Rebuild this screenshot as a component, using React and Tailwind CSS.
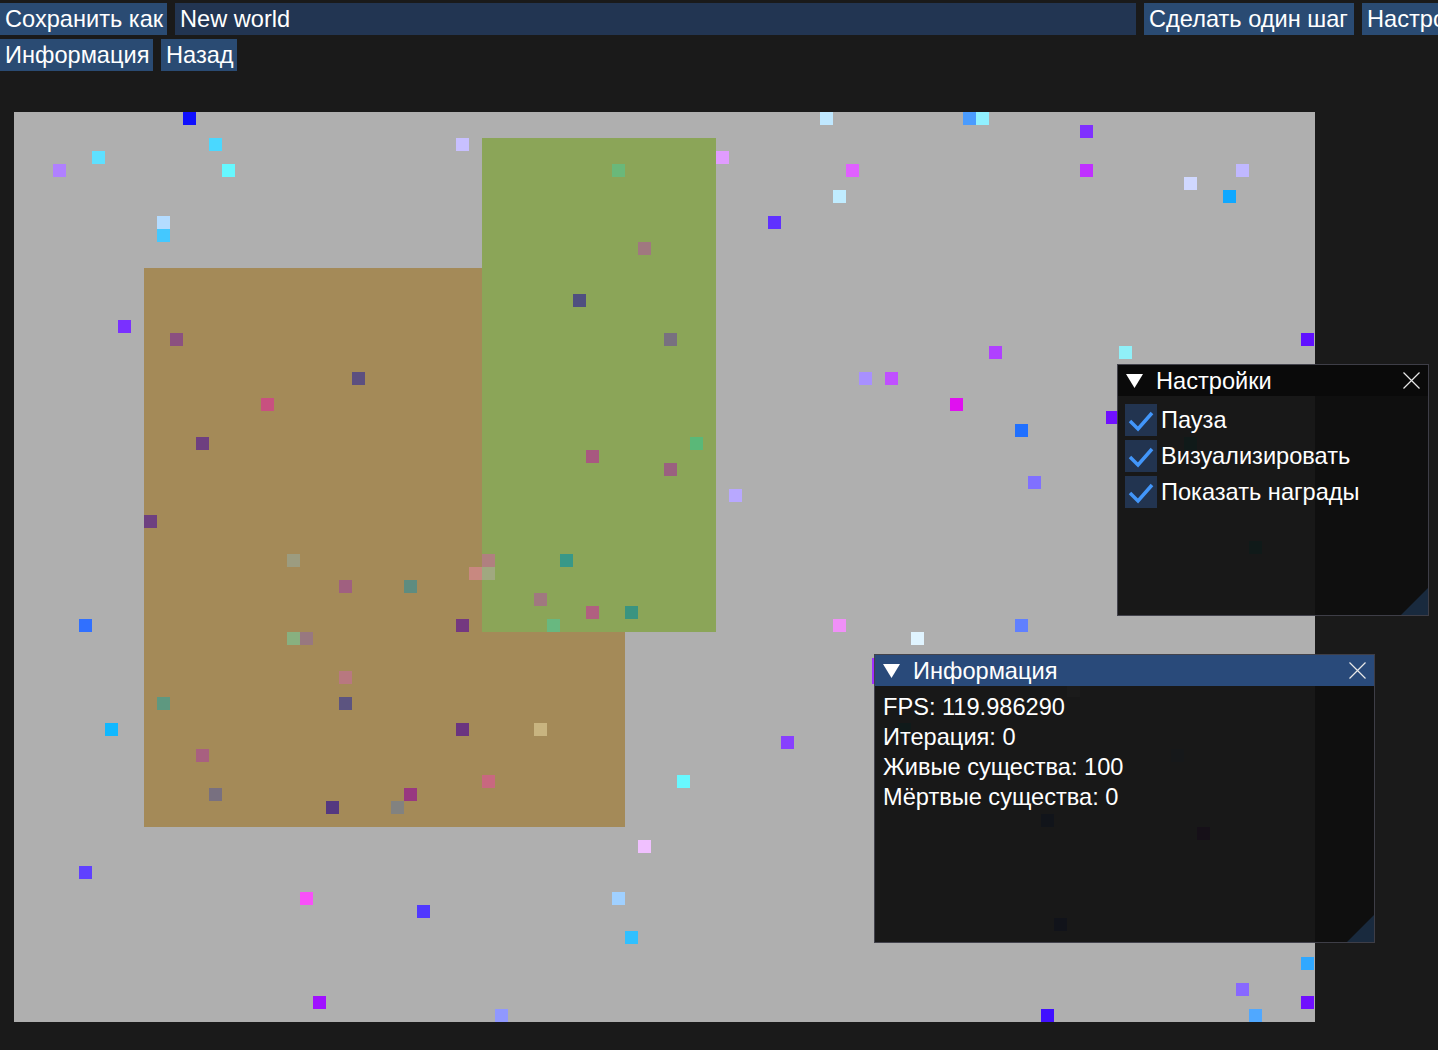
import React from 'react';

// world cells: [col, row, colour]
const cells = [
  [13, 0, '#1010ff'], [62, 0, '#c0e8ff'], [73, 0, '#4a9cff'], [74, 0, '#90f0ff'],
  [82, 1, '#8030ff'],
  [15, 2, '#4ad8ff'], [34, 2, '#c8c0ff'],
  [6, 3, '#5ee0ff'], [54, 3, '#e09cff'],
  [3, 4, '#b080ff'], [16, 4, '#66f8ff'], [46, 4, '#6ab87a'], [64, 4, '#e060ff'], [82, 4, '#c030ff'], [94, 4, '#c0b8ff'],
  [90, 5, '#d0d8ff'],
  [63, 6, '#c0ecff'], [93, 6, '#10a8ff'],
  [11, 8, '#b4dcff'], [58, 8, '#6030ff'],
  [11, 9, '#44c8ff'],
  [48, 10, '#a07880'],
  [43, 14, '#4f4f80'],
  [8, 16, '#7a30ff'], [99, 17, '#6010ff'],
  [12, 17, '#8b5080'], [50, 17, '#787080'],
  [75, 18, '#b040ff'], [85, 18, '#90f0f8'],
  [26, 20, '#5c4f80'], [65, 20, '#a890ff'], [67, 20, '#c050ff'],
  [19, 22, '#c85080'], [72, 22, '#e010f0'],
  [84, 23, '#7010ff'],
  [77, 24, '#2070ff'],
  [14, 25, '#6e3f80'], [52, 25, '#5ab878'], [90, 25, '#20c8b8'],
  [44, 26, '#a85880'],
  [50, 27, '#9a6080'],
  [78, 28, '#8070ff'],
  [55, 29, '#b8a8ff'],
  [10, 31, '#6e4080'],
  [95, 33, '#20c8b8'],
  [21, 34, '#9c9c80'], [36, 34, '#b08080'], [42, 34, '#389888'],
  [35, 35, '#c88880'], [36, 35, '#a0a880'],
  [25, 36, '#a06080'], [30, 36, '#5e8c80'],
  [40, 37, '#a07880'],
  [44, 38, '#b06080'], [47, 38, '#3a9480'],
  [5, 39, '#3070ff'], [34, 39, '#743880'], [41, 39, '#68b880'], [63, 39, '#f090f8'], [77, 39, '#6080ff'],
  [21, 40, '#88b080'], [22, 40, '#987880'], [69, 40, '#e0f4ff'],
  [66, 42, '#a030ff'], [66, 43, '#a030ff'],
  [25, 43, '#b87880'],
  [81, 44, '#d8d8d8'],
  [11, 45, '#5e9880'], [25, 45, '#5c5480'],
  [7, 47, '#10b8ff'], [34, 47, '#6a3480'], [40, 47, '#c8b480'], [68, 47, '#20c0c0'],
  [59, 48, '#8840ff'],
  [14, 49, '#a86080'], [89, 49, '#80a8c8'],
  [36, 51, '#c86880'], [51, 51, '#68f8ff'],
  [15, 52, '#787080'], [30, 52, '#983880'],
  [24, 53, '#543880'], [29, 53, '#828280'],
  [79, 54, '#3060c8'],
  [91, 55, '#8020a0'],
  [48, 56, '#f0c0ff'],
  [5, 58, '#6040ff'],
  [22, 60, '#f850f8'], [46, 60, '#a0d0ff'],
  [31, 61, '#5038ff'], [97, 61, '#a0a0a0'],
  [80, 62, '#3050c8'],
  [47, 63, '#30c0ff'],
  [99, 65, '#30a8ff'],
  [94, 67, '#8868ff'],
  [23, 68, '#a010ff'], [99, 68, '#7010ff'],
  [37, 69, '#9098ff'], [79, 69, '#4010ff'], [95, 69, '#50a8ff'],
];

const Arrow = () => (
  <svg width="17" height="14" viewBox="0 0 17 14" className="shrink-0">
    <polygon points="0,0 17,0 8.5,14" fill="#ffffff" />
  </svg>
);

const CloseX = () => (
  <svg width="17" height="17" viewBox="0 0 17 17" className="shrink-0">
    <path d="M0.5 0.5L16.5 16.5M16.5 0.5L0.5 16.5" stroke="#e8e8e8" strokeWidth="1.2" />
  </svg>
);

const Grip = () => (
  <svg width="27" height="27" viewBox="0 0 27 27" className="absolute right-0 bottom-0">
    <polygon points="27,0 27,27 0,27" fill="rgba(66,150,250,0.2)" />
  </svg>
);

const Window = ({ title, active, className, children }) => (
  <div className={`absolute border border-[rgba(110,110,128,0.5)] bg-[rgba(15,15,15,0.94)] ${className}`}>
    <div className={`h-[31px] flex items-center pl-[8px] pr-[8px] ${active ? 'bg-[#294a7a]' : 'bg-[#0a0a0a]'}`}>
      <Arrow />
      <span className="ml-[13px] flex-1">{title}</span>
      <CloseX />
    </div>
    <div className="p-[8px] pl-[7px]">{children}</div>
    <Grip />
  </div>
);

const Check = ({ label }) => (
  <div className="flex items-center gap-[4px]">
    <div className="w-[32px] h-[32px] bg-[#223450] shrink-0">
      <svg width="32" height="32" viewBox="0 0 32 32">
        <polyline points="5,17 13,25 27,9" fill="none" stroke="#4296fa" strokeWidth="3.5" />
      </svg>
    </div>
    <span>{label}</span>
  </div>
);

const App = () => {
  return (
    <div className="relative w-[1438px] h-[1050px] overflow-hidden bg-[#1a1a1a] text-white text-[23.6px] leading-[26px] font-['Liberation_Sans',Arial,sans-serif]">
      {/* верхняя панель */}
      <div className="flex flex-col gap-[4px] pt-[3px]">
        <div className="flex gap-[8px] whitespace-nowrap">
          <button className="shrink-0 h-[32px] w-[167px] px-[5px] text-left bg-[#2a4b73]">Сохранить как</button>
          <div className="shrink-0 h-[32px] w-[961px] px-[5px] flex items-center bg-[#223552]">New world</div>
          <button className="shrink-0 h-[32px] w-[210px] px-[5px] text-left bg-[#2a4b73]">Сделать один шаг</button>
          <button className="shrink-0 h-[32px] px-[5px] text-left bg-[#2a4b73]">Настройки</button>
        </div>
        <div className="flex gap-[8px] whitespace-nowrap">
          <button className="shrink-0 h-[32px] w-[153px] px-[5px] text-left bg-[#2a4b73]">Информация</button>
          <button className="shrink-0 h-[32px] w-[76px] px-[5px] text-left bg-[#2a4b73]">Назад</button>
        </div>
      </div>

      {/* мир */}
      <div className="relative ml-[14px] mt-[41px] w-[1301px] h-[910px] bg-[#afafaf]">
        <div className="absolute left-[130px] top-[156px] w-[481px] h-[559px] bg-[#a48a58]" />
        <div className="absolute left-[468px] top-[26px] w-[234px] h-[494px] bg-[#8ba558]" />
        {cells.map(([c, r, color], i) => (
          <div
            key={i}
            className="absolute w-[13px] h-[13px]"
            style={{ left: c * 13, top: r * 13, backgroundColor: color }}
          />
        ))}
      </div>

      <Window title="Настройки" className="left-[1117px] top-[364px] w-[312px] h-[252px]">
        <div className="flex flex-col gap-[4px]">
          <Check label="Пауза" />
          <Check label="Визуализировать" />
          <Check label="Показать награды" />
        </div>
      </Window>

      <Window title="Информация" active className="left-[874px] top-[654px] w-[501px] h-[289px]">
        <div className="flex flex-col gap-[4px] pl-[1px]">
          <div>FPS: 119.986290</div>
          <div>Итерация: 0</div>
          <div>Живые существа: 100</div>
          <div>Мёртвые существа: 0</div>
        </div>
      </Window>
    </div>
  );
};

export default App;
